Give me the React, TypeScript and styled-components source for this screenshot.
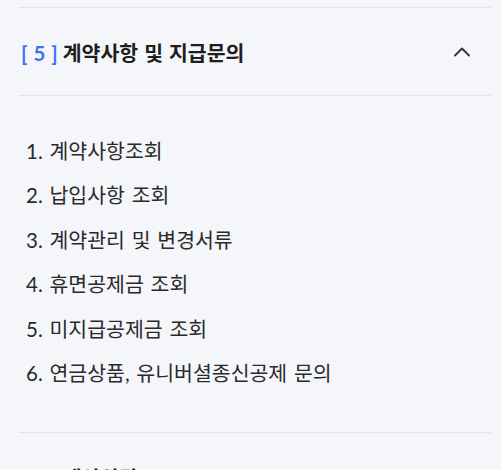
import styled, { createGlobalStyle } from "styled-components";

const GlobalStyle = createGlobalStyle`
  html, body {
    margin: 0;
    padding: 0;
    background: #f5f6fa;
  }
  body {
    font-family: Lato, "Noto Sans CJK KR", sans-serif;
    color: #222;
  }
`;

type Section = {
  no: number;
  title: string;
  open: boolean;
  items: string[];
};

const sections: Section[] = [
  {
    no: 5,
    title: "계약사항 및 지급문의",
    open: true,
    items: [
      "계약사항조회",
      "납입사항 조회",
      "계약관리 및 변경서류",
      "휴면공제금 조회",
      "미지급공제금 조회",
      "연금상품, 유니버셜종신공제 문의",
    ],
  },
  { no: 6, title: "계약상담", open: false, items: [] },
];

const Page = styled.div`
  padding: 7px 10px 0 19px;
`;

const Block = styled.section`
  border-top: 1px solid #e2e4ea;
`;

const Header = styled.button`
  display: flex;
  align-items: center;
  justify-content: space-between;
  width: 100%;
  height: 87px;
  padding: 0 20px 0 2px;
  border: 0;
  background: transparent;
  font: inherit;
  cursor: pointer;
  text-align: left;
`;

const Title = styled.h3`
  margin: 0;
  font-size: 20.5px;
  font-weight: 700;
  color: #1e1e1e;
  word-spacing: 1px;
`;

const Num = styled.span`
  color: #3f72ee;
  margin-right: 5px;
  font-weight: 700;
`;

const Chevron = styled.svg<{ $open: boolean }>`
  width: 18px;
  height: 18px;
  transform: rotate(${(p) => (p.$open ? 0 : 180)}deg);
`;

const Body = styled.ol`
  list-style: none;
  margin: 0;
  padding: 33px 0 37px 7px;
  border-top: 1px solid #e2e4ea;
`;

const Item = styled.li`
  font-size: 20.5px;
  line-height: 44.4px;
  word-spacing: 1.5px;
  color: #2a2a2a;
`;

export default function App() {
  return (
    <>
      <GlobalStyle />
      <Page>
        {sections.map((s) => (
          <Block key={s.no}>
            <Header>
              <Title>
                <Num>[ {s.no} ]</Num>
                {s.title}
              </Title>
              <Chevron $open={s.open} viewBox="0 0 18 18" fill="none">
                <path
                  d="M2 12.5 L9 5.5 L16 12.5"
                  stroke="#333"
                  strokeWidth="1.8"
                  strokeLinecap="round"
                  strokeLinejoin="round"
                />
              </Chevron>
            </Header>
            {s.open && (
              <Body>
                {s.items.map((t, i) => (
                  <Item key={t}>
                    {i + 1}. {t}
                  </Item>
                ))}
              </Body>
            )}
          </Block>
        ))}
      </Page>
    </>
  );
}
